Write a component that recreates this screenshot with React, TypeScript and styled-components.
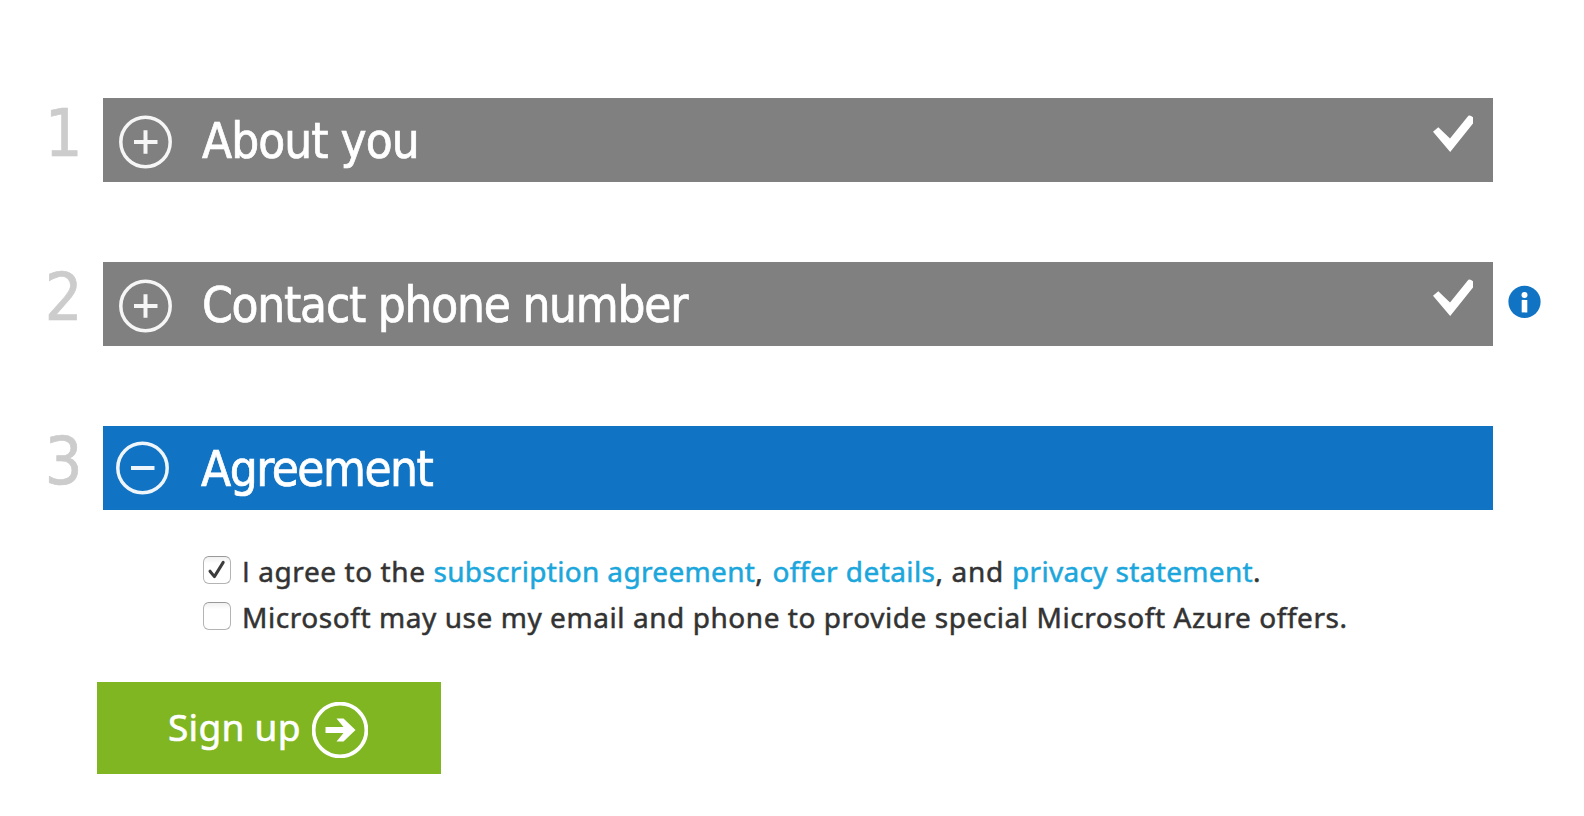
import React from 'react';
import styled, { createGlobalStyle } from 'styled-components';

const GlobalStyle = createGlobalStyle`
  body { margin: 0; background: #fff; }
  *, *::before, *::after { box-sizing: border-box; }
`;

const Page = styled.main`
  padding: 98px 0 0;
  width: 1584px;
  height: 816px;
  overflow: hidden;
`;

const Steps = styled.div`
  display: flex;
  flex-direction: column;
  gap: 80px;
`;

const Step = styled.section`
  display: flex;
  height: 84px;
`;

const StepNumber = styled.span`
  width: 103px;
  padding-right: 20.5px;
  text-align: right;
  color: #ccc;
  font: 66px/72px "DejaVu Sans Condensed", "DejaVu Sans", sans-serif;
  -webkit-text-stroke: 0.7px #ccc;
`;

const Bar = styled.button<{ $active?: boolean }>`
  display: flex;
  align-items: flex-start;
  width: 1390px;
  height: 84px;
  padding: 0 20px 0 ${p => (p.$active ? 13 : 16)}px;
  border: 0;
  background: ${p => (p.$active ? '#1073c3' : '#808080')};
  color: #fff;
  text-align: left;
`;

const Toggle = styled.svg<{ $top: number }>`
  flex: none;
  width: 54px;
  height: 54px;
  margin-top: ${p => p.$top}px;
`;

const Title = styled.span<{ $spacing: number; $indent: number }>`
  flex: 1;
  margin-left: ${p => p.$indent}px;
  font: 49px/88px "DejaVu Sans Condensed", "DejaVu Sans", sans-serif;
  letter-spacing: ${p => p.$spacing}px;
  white-space: nowrap;
  -webkit-text-stroke: 0.7px #fff;
`;

const Done = styled.svg`
  flex: none;
  width: 40px;
  height: 38px;
  margin-top: 16px;
`;

const Info = styled.svg`
  flex: none;
  width: 33px;
  height: 33px;
  margin: 23px 0 0 15px;
`;

const Terms = styled.div`
  display: flex;
  flex-direction: column;
  padding: 36px 0 0 203px;
`;

const Term = styled.label`
  display: flex;
  align-items: flex-start;
  height: 46px;
  color: #333;
  font: 28px/50px "Noto Sans", "Open Sans", sans-serif;
  white-space: pre;
`;

const Box = styled.span`
  flex: none;
  width: 28px;
  height: 28px;
  margin: 10px 11px 0 0;
  border: 1.5px solid #b4b4b4;
  border-top-color: #999;
  border-radius: 6px;
  background: linear-gradient(#f1f1f1, #fff 25%);
  svg { display: block; width: 25px; height: 25px; }
`;

const Copy = styled.span`
  -webkit-text-stroke: 0.5px currentColor;
`;

const Part = styled.span<{ $spacing: number }>`
  letter-spacing: ${p => p.$spacing}px;
`;

const PlainCap = styled.span`
  font-family: "Open Sans", sans-serif;
  line-height: 1;
`;

const Link = styled(Part)`
  color: #1ba6dc;
`;

const SignUp = styled.button`
  display: flex;
  align-items: flex-start;
  width: 344px;
  height: 92px;
  margin: 44px 0 0 97px;
  padding: 0 0 0 71px;
  border: 0;
  background: #80b622;
  color: #fff;
  font: 37px/90px "Noto Sans", "Open Sans", sans-serif;
  svg { width: 56px; height: 56px; margin-top: 20px; }
`;

const SignUpText = styled.span`
  width: 144px;
  text-align: left;
  letter-spacing: 0.3px;
  -webkit-text-stroke: 0.6px #fff;
`;

function ToggleIcon({ open }: { open?: boolean }) {
  return (
    <Toggle $top={open ? 15 : 17} viewBox="0 0 54 54" fill="none" stroke="#fff">
      <circle cx="26.5" cy="27" r="24.7" strokeWidth="3.5" strokeOpacity="0.93" />
      <path d={open ? 'M15 27H38.5' : 'M15 27H38.5M26.5 15.2V38.8'} strokeWidth="4" strokeOpacity="0.93" />
    </Toggle>
  );
}

function DoneIcon() {
  return (
    <Done viewBox="0 0 40 38">
      <path d="M0 17.8L5.3 13.2L17 24.5L35.4 1.8Q37 .6 40 3.2V9.5L17.2 38Z" fill="#fff" />
    </Done>
  );
}

const steps = [
  { title: 'About you', spacing: -0.95, indent: 29 },
  { title: 'Contact phone number', spacing: -1.22, indent: 29 },
  { title: 'Agreement', spacing: -1.5, indent: 31, open: true },
];

export default function App() {
  return (
    <Page>
      <GlobalStyle />
      <Steps>
        {steps.map((s, i) => (
          <Step key={s.title}>
            <StepNumber>{i + 1}</StepNumber>
            <Bar $active={s.open}>
              <ToggleIcon open={s.open} />
              <Title $spacing={s.spacing} $indent={s.indent}>{s.title}</Title>
              {!s.open && <DoneIcon />}
            </Bar>
            {i === 1 && (
              <Info viewBox="0 0 33 33">
                <circle cx="16.5" cy="16.8" r="16.1" fill="#1073c3" />
                <circle cx="16.5" cy="10" r="3" fill="#fff" />
                <path d="M13.7 14.9h5.6v12.5h-5.6z" fill="#fff" />
              </Info>
            )}
          </Step>
        ))}
      </Steps>
      <Terms>
        <Term>
          <Box>
            <svg viewBox="0 0 25 25" fill="none" stroke="#3c3c3c">
              <path d="M6 14.2L10.4 19.6L19.2 5.4" strokeLinecap="round" strokeLinejoin="round" strokeWidth="3" />
            </svg>
          </Box>
          <Copy>
            <Part $spacing={0.58}><PlainCap>I</PlainCap> agree to the </Part>
            <Link $spacing={0.33}>subscription agreement</Link>
            <Part $spacing={1.2}>, </Part>
            <Link $spacing={0.42}>offer details</Link>
            <Part $spacing={0.7}>, and </Part>
            <Link $spacing={0.33}>privacy statement</Link>.
          </Copy>
        </Term>
        <Term>
          <Box />
          <Copy>
            <Part $spacing={0.56}>Microsoft may use my email and phone to provide special Microsoft Azure offers.</Part>
          </Copy>
        </Term>
      </Terms>
      <SignUp>
        <SignUpText>Sign up</SignUpText>
        <svg viewBox="0 0 56 56" fill="none" stroke="#fff">
          <circle cx="28" cy="28" r="26.4" strokeWidth="3.8" />
          <path d="M13.5 28H39" strokeWidth="6" />
          <path d="M24.5 16.5H31.5L43.5 28L31.5 39.5H24.5L34 28Z" fill="#fff" stroke="none" />
        </svg>
      </SignUp>
    </Page>
  );
}
